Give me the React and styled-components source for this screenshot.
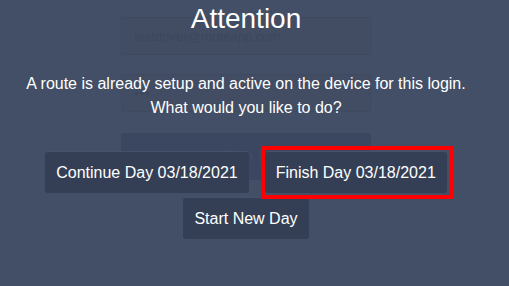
import styled, { createGlobalStyle } from "styled-components"

const GlobalStyle = createGlobalStyle`
    html, body {
        margin: 0;
        padding: 0;
        background-color: #434f66;
        font-family: "Liberation Sans", Arial, sans-serif;
    }
`

const Page = styled.div`
    position: relative;
    width: 492px;
    height: 286px;
    overflow: hidden;
`

const LoginForm = styled.div`
    width: 250px;
    margin: 17px auto 0;
    display: flex;
    flex-direction: column;
    gap: 19px;
`

const Field = styled.div`
    height: 36px;
    border: 1px solid #3f4a61;
    border-radius: 3px;
    background-color: #424d64;
    display: flex;
    align-items: center;
    padding: 0 12px;
    font-size: 13px;
    color: #3d475c;
    letter-spacing: ${(props) => (props.$secret ? "1px" : "0")};
`

const SignIn = styled.div`
    height: 47px;
    margin-top: 2px;
    border-radius: 4px;
    background-color: #3b4760;
    display: flex;
    align-items: center;
    justify-content: center;
    font-size: 16px;
    color: #404b63;
`

const Overlay = styled.div`
    position: absolute;
    inset: 0;
    display: flex;
    flex-direction: column;
    align-items: center;
    color: #ffffff;
`

const Title = styled.h1`
    margin: 3px 0 0;
    font-size: 28px;
    font-weight: normal;
    line-height: 32px;
`

const Message = styled.p`
    margin: 37px 0 0;
    font-size: 16px;
    line-height: 24px;
    text-align: center;
`

const Actions = styled.div`
    margin-top: 32px;
    display: flex;
    flex-direction: column;
    align-items: center;
    gap: 5px;
`

const Row = styled.div`
    display: flex;
    gap: 16px;
`

const Button = styled.button`
    padding: 11px 11px;
    font-family: inherit;
    font-size: 16px;
    line-height: 19px;
    color: #ffffff;
    background-color: #343f55;
    border: none;
    border-top: 1px solid #46516a;
    margin-top: -1px;
    border-radius: 3px;
    white-space: nowrap;
    cursor: pointer;
`

const Highlight = styled.div`
    position: relative;
    display: flex;

    &::after {
        content: "";
        position: absolute;
        left: -4px;
        right: -7px;
        top: -6px;
        bottom: -6px;
        border: 4px solid #ff0000;
        pointer-events: none;
    }
`

const App = () => {
    const day = "03/18/2021"

    return (
        <>
            <GlobalStyle />
            <Page>
                <LoginForm>
                    <Field>testdriver@routeapp.com</Field>
                    <Field $secret>•••</Field>
                    <SignIn>Sign In</SignIn>
                </LoginForm>
                <Overlay>
                    <Title>Attention</Title>
                    <Message>
                        A route is already setup and active on the device for this login.
                        <br />
                        What would you like to do?
                    </Message>
                    <Actions>
                        <Row>
                            <Button>Continue Day {day}</Button>
                            <Highlight>
                                <Button>Finish Day {day}</Button>
                            </Highlight>
                        </Row>
                        <Button>Start New Day</Button>
                    </Actions>
                </Overlay>
            </Page>
        </>
    )
}

export default App
